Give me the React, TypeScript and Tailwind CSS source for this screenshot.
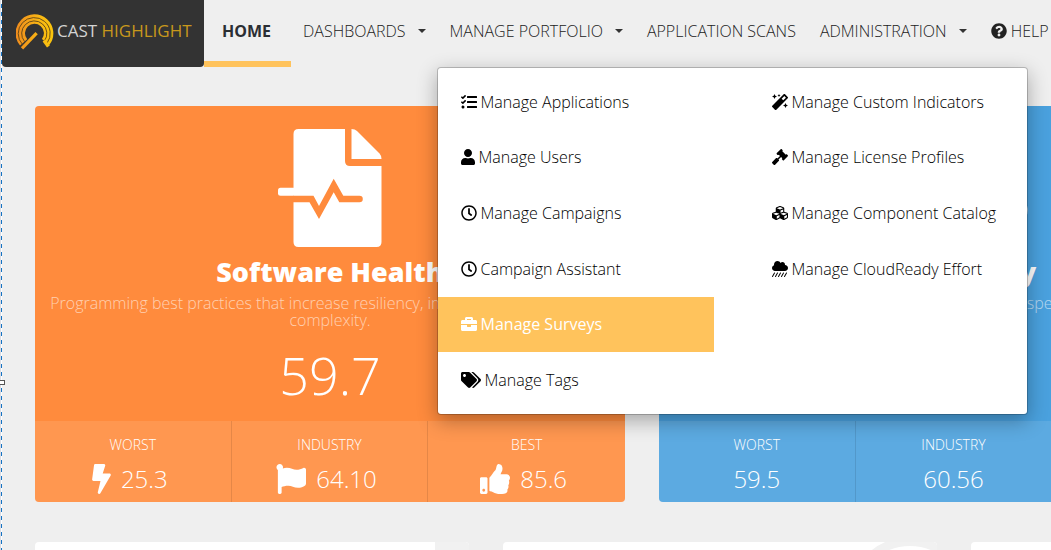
import React from 'react';
import {
  FaBolt,
  FaBriefcase,
  FaCloudShowersHeavy,
  FaCubes,
  FaFlag,
  FaGavel,
  FaMagic,
  FaQuestionCircle,
  FaRegClock,
  FaTags,
  FaTasks,
  FaThumbsUp,
  FaUser,
} from 'react-icons/fa';
import type { IconType } from 'react-icons';

interface MenuEntry {
  label: string;
  icon: IconType;
  iconClass?: string;
  active?: boolean;
}

interface Stat {
  label: string;
  value: string;
  icon?: IconType;
  iconClass?: string;
}

const leftMenu: MenuEntry[] = [
  { label: 'Manage Applications', icon: FaTasks },
  { label: 'Manage Users', icon: FaUser, iconClass: 'w-3.5' },
  { label: 'Manage Campaigns', icon: FaRegClock },
  { label: 'Campaign Assistant', icon: FaRegClock },
  { label: 'Manage Surveys', icon: FaBriefcase, active: true },
  { label: 'Manage Tags', icon: FaTags, iconClass: 'w-5' },
];

const rightMenu: MenuEntry[] = [
  { label: 'Manage Custom Indicators', icon: FaMagic },
  { label: 'Manage License Profiles', icon: FaGavel },
  { label: 'Manage Component Catalog', icon: FaCubes },
  { label: 'Manage CloudReady Effort', icon: FaCloudShowersHeavy },
];

const healthStats: Stat[] = [
  { label: 'WORST', value: '25.3', icon: FaBolt, iconClass: 'w-[19px]' },
  { label: 'INDUSTRY', value: '64.10', icon: FaFlag, iconClass: 'w-[30px]' },
  { label: 'BEST', value: '85.6', icon: FaThumbsUp, iconClass: 'w-[30px]' },
];

const cloudStats: Stat[] = [
  { label: 'WORST', value: '59.5' },
  { label: 'INDUSTRY', value: '60.56' },
  { label: 'BEST', value: '78.2' },
];

const Logo: React.FC = () => (
  <a href="#" className="flex h-[67px] w-[202px] shrink-0 items-center rounded-b bg-[#333] pl-3.5">
    <svg viewBox="0 0 38 36" className="mb-1 h-9 w-[38px] shrink-0" fill="none">
      <defs>
        <linearGradient id="gauge" x1="0" y1="0" x2="38" y2="0" gradientUnits="userSpaceOnUse">
          <stop offset="0" stopColor="#f08c1e" />
          <stop offset="0.6" stopColor="#f9b614" />
          <stop offset="1" stopColor="#fac60c" />
        </linearGradient>
      </defs>
      <path d="M7.6 28.4A14.2 14.2 0 1 1 29.6 28" stroke="url(#gauge)" strokeWidth="9.4" />
      <g stroke="#5a4318" strokeWidth="0.9">
        <path d="M6.6 30.6A16 16 0 1 1 31 29.2" />
        <path d="M8.6 27.6A12.6 12.6 0 1 1 28.4 27" />
      </g>
      <path d="M9.4 32.4L21 20.6" stroke="#333" strokeWidth="3" />
      <path d="M6 34.4L20.6 19.2" stroke="url(#gauge)" strokeWidth="3.2" />
      <path d="M28 26.4L32.4 32.6" stroke="url(#gauge)" strokeWidth="3.4" />
    </svg>
    <span className="mb-1.5 ml-[3px] text-[17px] font-normal whitespace-nowrap text-[#d4d4d4]">
      CAST <span className="text-[#c8981c]">HIGHLIGHT</span>
    </span>
  </a>
);

const Caret: React.FC = () => (
  <span className="ml-3 inline-block border-x-4 border-t-4 border-x-transparent border-t-[#333] align-middle" />
);

const MenuItem: React.FC<{ entry: MenuEntry }> = ({ entry }) => {
  const Icon = entry.icon;
  return (
    <a
      href="#"
      className={`flex items-center gap-1 pl-[23px] whitespace-nowrap ${
        entry.active ? 'bg-[#ffc35c] font-medium text-white' : 'text-black'
      }`}
    >
      <Icon className={`h-4 shrink-0 ${entry.iconClass ?? 'w-4'}`} />
      {entry.label}
    </a>
  );
};

const PortfolioMenu: React.FC = () => (
  <div className="absolute top-full -left-px z-20 grid w-[591px] grid-cols-[276px_1fr] gap-x-[35px] rounded border border-black/20 bg-white bg-clip-padding py-1.5 text-base shadow-[0_6px_20px_rgba(0,0,0,0.3)]">
    <div className="grid min-h-[334px] grid-rows-6">
      {leftMenu.map(entry => (
        <MenuItem key={entry.label} entry={entry} />
      ))}
    </div>
    <div className="grid min-h-[334px] grid-rows-6">
      {rightMenu.map(entry => (
        <MenuItem key={entry.label} entry={entry} />
      ))}
    </div>
  </div>
);

const NavBar: React.FC = () => (
  <header className="flex h-[67px]">
    <Logo />
    <nav className="flex text-base whitespace-nowrap text-[#222]">
      <a href="#" className="flex w-[87px] items-center justify-center border-b-[6px] border-[#ffc35c] pr-0.5 font-bold text-[#2b2e33]">
        HOME
      </a>
      <button type="button" className="flex items-center px-3 pb-1.5">
        DASHBOARDS <Caret />
      </button>
      <div className="relative flex">
        <button type="button" aria-expanded="true" className="flex items-center px-3 pb-1.5">
          MANAGE PORTFOLIO <Caret />
        </button>
        <PortfolioMenu />
      </div>
      <a href="#" className="flex items-center px-3 pb-1.5">
        APPLICATION SCANS
      </a>
      <button type="button" className="flex items-center px-3 pb-1.5">
        ADMINISTRATION <Caret />
      </button>
      <a href="#" className="flex items-center gap-1 px-3 pb-1.5">
        <FaQuestionCircle className="size-4" /> HELP
      </a>
    </nav>
  </header>
);

const HealthIcon: React.FC = () => (
  <svg viewBox="0 0 104 118" className="h-[118px] w-[104px]" fill="#fff">
    <path d="M20.5 0H67V32Q67 37 72 37H103.5V113Q103.5 118 98.5 118H20.5Q15.5 118 15.5 113V5Q15.5 0 20.5 0Z" />
    <path d="M73.5 0Q77 0 79 2L101.5 24.5Q103.5 26.5 103.5 30H73.5Z" />
    <rect x="0" y="58.7" width="18" height="8" rx="2.5" />
    <path
      fill="#ff8b3d"
      d="M15 66.7H35.5L41 77L55.7 49.7L65.3 66.7H81.5A3.3 3.3 0 0 1 81.5 73.3H61.3L55.7 63.3L41 90L31.5 73.3H15Z"
    />
  </svg>
);

const CloudIcon: React.FC = () => (
  <svg viewBox="0 0 150 118" className="h-[118px] w-[150px]" fill="#fff">
    <path d="M32 104A30 30 0 0 1 26 45A38 38 0 0 1 98 32A29 29 0 0 1 124 58A23 23 0 0 1 127 104Z" />
  </svg>
);

interface ScoreCardProps {
  title: string;
  description: string;
  score: string;
  stats: Stat[];
  className: string;
  icon: React.ReactNode;
}

const ScoreCard: React.FC<ScoreCardProps> = ({ title, description, score, stats, className, icon }) => (
  <section className={`w-[590px] shrink-0 overflow-hidden rounded text-center text-white ${className}`}>
    <div className="flex h-[315px] flex-col items-center px-3 pt-[23px]">
      {icon}
      <h2 className="mt-[7px] text-[27px] leading-9 font-extrabold">{title}</h2>
      <p className="mt-[5px] text-base leading-[17px] text-white/60">{description}</p>
      <p className="mt-5 text-[52px] leading-[52px]">{score}</p>
    </div>
    <dl className="grid grid-cols-3 divide-x divide-black/10 bg-white/10">
      {stats.map(({ label, value, icon: Icon, iconClass }) => (
        <div key={label} className="h-[81px] pt-3.5">
          <dt className="text-sm">{label}</dt>
          <dd className={`mt-2 flex items-center justify-center gap-2.5 text-2xl leading-8 ${Icon ? 'pr-1.5' : ''}`}>
            {Icon && <Icon className={`h-[30px] ${iconClass}`} />}
            {value}
          </dd>
        </div>
      ))}
    </dl>
  </section>
);

const App: React.FC = () => (
  <div className="flex h-screen overflow-hidden bg-[#efefef] font-['Open_Sans',sans-serif] font-light">
    <div className="relative w-0.5 shrink-0 border-l border-[#d8dbe3] bg-[repeating-linear-gradient(180deg,#fff_0,#fff_4px,#1473c4_4px,#1473c4_8px)] bg-clip-padding">
      <span className="absolute top-[380px] -left-px h-[5px] w-[5px] border border-l-0 border-[#555] bg-white" />
    </div>
    <div className="min-w-0 flex-1">
      <NavBar />
      <main className="flex flex-col gap-10 pt-[39px] pl-[33px]">
        <div className="flex gap-[34px]">
          <ScoreCard
            title="Software Health"
            description="Programming best practices that increase resiliency, improve agility, and lower complexity."
            score="59.7"
            stats={healthStats}
            className="bg-[#ff8b3d]"
            icon={<HealthIcon />}
          />
          <ScoreCard
            title="CloudReady"
            description="Code insights that accelerate migration speed to the cloud."
            score="63.4"
            stats={cloudStats}
            className="bg-[#4aa1de]"
            icon={<CloudIcon />}
          />
        </div>
        <div className="flex gap-[34px]">
          <section className="flex h-40 w-[434px] shrink-0 justify-end overflow-hidden rounded bg-white">
            <div className="w-[34px] bg-[#f1f1f1]" />
          </section>
          <section className="flex h-40 w-[434px] shrink-0 justify-end overflow-hidden rounded bg-white">
            <svg viewBox="0 0 90 120" className="h-[120px] w-[90px]" fill="none">
              <circle cx="63" cy="57" r="57.5" stroke="#f1f1f1" strokeWidth="9" />
            </svg>
          </section>
          <section className="h-40 w-[434px] shrink-0 rounded bg-white" />
        </div>
      </main>
    </div>
  </div>
);

export default App;
